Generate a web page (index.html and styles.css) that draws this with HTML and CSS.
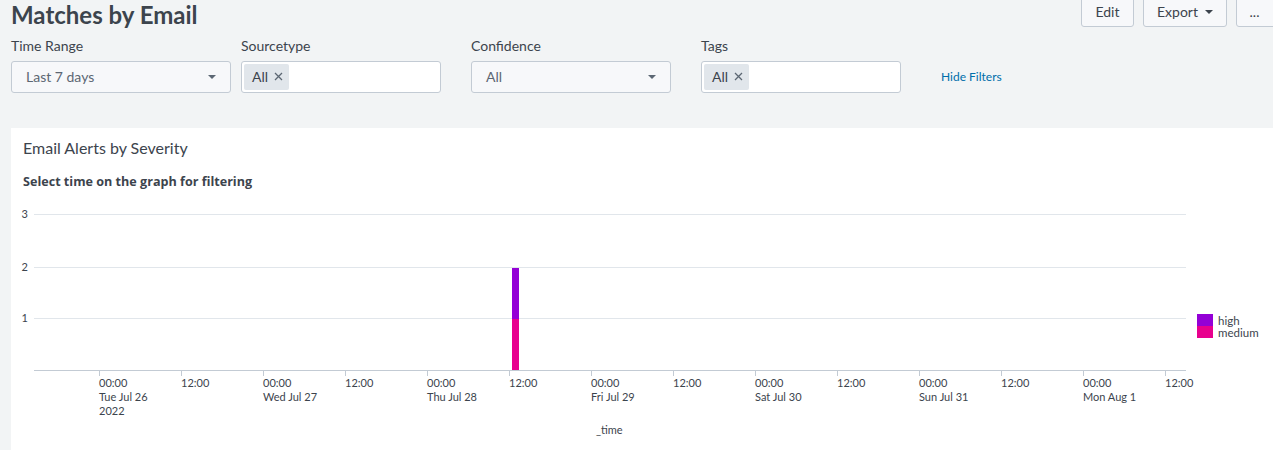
FILE: index.html
```html
<!DOCTYPE html>
<html>
<head>
<meta charset="utf-8">
<link rel="stylesheet" href="styles.css">
</head>
<body>
<div class="header">
  <h1 class="title">Matches by Email</h1>
  <div class="actions">
    <button class="btn btn-edit">Edit</button>
    <button class="btn btn-export">Export <span class="caret"></span></button>
    <button class="btn btn-more">...</button>
  </div>
</div>
<div class="filters">
  <div class="filter">
    <div class="label">Time Range</div>
    <div class="select wide"><span>Last 7 days</span><span class="caret"></span></div>
  </div>
  <div class="filter">
    <div class="label">Sourcetype</div>
    <div class="multi"><span class="pill">All <svg class="x" width="9" height="9" viewBox="0 0 9 9"><path d="M1 1L8 8M8 1L1 8" stroke="#5c6773" stroke-width="1.3"/></svg></span></div>
  </div>
  <div class="filter">
    <div class="label">Confidence</div>
    <div class="select"><span>All</span><span class="caret"></span></div>
  </div>
  <div class="filter">
    <div class="label">Tags</div>
    <div class="multi"><span class="pill">All <svg class="x" width="9" height="9" viewBox="0 0 9 9"><path d="M1 1L8 8M8 1L1 8" stroke="#5c6773" stroke-width="1.3"/></svg></span></div>
  </div>
  <div class="filter hide">
    <a class="hide-link">Hide Filters</a>
  </div>
</div>
<div class="panel">
  <div class="panel-title">Email Alerts by Severity</div>
  <div class="panel-sub">Select time on the graph for filtering</div>
  <svg class="chart" width="1262" height="250" viewBox="0 0 1262 250" font-family="Lato, 'Open Sans', sans-serif" font-size="11" fill="#3c444d">
    <g stroke="#e1e6eb" stroke-width="1">
      <line x1="23" y1="14.5" x2="1175" y2="14.5"/>
      <line x1="23" y1="67.5" x2="1175" y2="67.5"/>
      <line x1="23" y1="118.5" x2="1175" y2="118.5"/>
    </g>
    <line x1="23" y1="170.5" x2="1175" y2="170.5" stroke="#c3cbd4"/>
    <g text-anchor="end">
      <text x="17" y="18">3</text>
      <text x="17" y="71">2</text>
      <text x="17" y="122">1</text>
    </g>
    <g stroke="#c3cbd4">
      <line x1="88.5" y1="170" x2="88.5" y2="176"/>
      <line x1="170.5" y1="170" x2="170.5" y2="176"/>
      <line x1="252.5" y1="170" x2="252.5" y2="176"/>
      <line x1="334.5" y1="170" x2="334.5" y2="176"/>
      <line x1="416.5" y1="170" x2="416.5" y2="176"/>
      <line x1="498.5" y1="170" x2="498.5" y2="176"/>
      <line x1="580.5" y1="170" x2="580.5" y2="176"/>
      <line x1="662.5" y1="170" x2="662.5" y2="176"/>
      <line x1="744.5" y1="170" x2="744.5" y2="176"/>
      <line x1="826.5" y1="170" x2="826.5" y2="176"/>
      <line x1="908.5" y1="170" x2="908.5" y2="176"/>
      <line x1="990.5" y1="170" x2="990.5" y2="176"/>
      <line x1="1072.5" y1="170" x2="1072.5" y2="176"/>
      <line x1="1154.5" y1="170" x2="1154.5" y2="176"/>
    </g>
    <g>
      <text x="88" y="187">00:00</text><text x="88" y="201">Tue Jul 26</text><text x="88" y="215">2022</text>
      <text x="170" y="187">12:00</text>
      <text x="252" y="187">00:00</text><text x="252" y="201">Wed Jul 27</text>
      <text x="334" y="187">12:00</text>
      <text x="416" y="187">00:00</text><text x="416" y="201">Thu Jul 28</text>
      <text x="498" y="187">12:00</text>
      <text x="580" y="187">00:00</text><text x="580" y="201">Fri Jul 29</text>
      <text x="662" y="187">12:00</text>
      <text x="744" y="187">00:00</text><text x="744" y="201">Sat Jul 30</text>
      <text x="826" y="187">12:00</text>
      <text x="908" y="187">00:00</text><text x="908" y="201">Sun Jul 31</text>
      <text x="990" y="187">12:00</text>
      <text x="1072" y="187">00:00</text><text x="1072" y="201">Mon Aug 1</text>
      <text x="1154" y="187">12:00</text>
    </g>
    <rect x="501" y="68" width="7" height="51" fill="#9400d6"/>
    <rect x="501" y="119" width="7" height="51" fill="#e8008e"/>
    <rect x="1186" y="114" width="16" height="12" fill="#9400d6"/>
    <rect x="1186" y="126" width="16" height="12" fill="#e8008e"/>
    <text x="1207" y="125" font-size="11.5">high</text>
    <text x="1207" y="137" font-size="11.5">medium</text>
    <text x="585" y="234">_time</text>
  </svg>
</div>
</body>
</html>
```
FILE: styles.css
```css
* { box-sizing: border-box; }
html, body { margin: 0; padding: 0; }
body {
  background: #f2f4f5;
  font-family: Lato, "Open Sans", sans-serif;
  color: #3c444d;
  width: 1273px;
  height: 450px;
  overflow: hidden;
}
.header {
  display: flex;
  justify-content: space-between;
  align-items: flex-start;
  padding-left: 11px;
  height: 36px;
}
.title {
  margin: 0;
  font-size: 24px;
  font-weight: 700;
  line-height: 30px;
  color: #3c444d;
}
.actions {
  display: flex;
  gap: 9px;
  margin-top: -8px;
  margin-right: -13px;
}
.btn {
  height: 35px;
  padding: 4px 0 0;
  border: 1px solid #c3cbd4;
  border-radius: 3px;
  background: #f7f8fa;
  color: #3c444d;
  font-family: Lato, "Open Sans", sans-serif;
  font-size: 14px;
  display: flex;
  align-items: center;
  justify-content: center;
  gap: 7px;
}
.btn-edit { width: 53px; }
.btn-export { width: 84px; }
.btn-more { width: 50px; padding-right: 13px; }
.btn .caret {
  width: 0; height: 0;
  border-left: 4px solid transparent;
  border-right: 4px solid transparent;
  border-top: 4px solid #3c444d;
}
.filters {
  display: flex;
  gap: 10px;
  padding-left: 11px;
}
.filter { width: 220px; }
.label {
  font-size: 14px;
  line-height: 20px;
  height: 25px;
}
.select, .multi {
  height: 32px;
  width: 200px;
  border: 1px solid #c3cbd4;
  border-radius: 3px;
  display: flex;
  align-items: center;
  font-size: 14px;
}
.select.wide { width: 220px; }
.select {
  background: #f7f8fa;
  justify-content: space-between;
  padding: 0 14px 1px;
  color: #5c6773;
}
.select .caret {
  width: 0; height: 0;
  border-left: 4px solid transparent;
  border-right: 4px solid transparent;
  border-top: 4px solid #5c6773;
}
.multi {
  background: #fff;
  padding: 0 2px;
}
.pill {
  background: #e1e6eb;
  border-radius: 2px;
  height: 26px;
  padding: 0 6px 1px 8px;
  display: flex;
  align-items: center;
  gap: 6px;
  color: #3c444d;
}
.hide { display: flex; align-items: flex-end; margin-left: 10px; }
.hide-link {
  color: #006eaa;
  font-size: 12px;
  line-height: 32px;
}
.panel {
  margin: 35px 0 0 11px;
  background: #fff;
  height: 322px;
  padding-top: 10px;
}
.panel-title {
  font-size: 16px;
  line-height: 20px;
  padding-left: 12px;
}
.panel-sub {
  font-family: "Open Sans", Lato, sans-serif;
  font-size: 12.6px;
  font-weight: 700;
  line-height: 16px;
  padding-left: 12px;
  margin-top: 16px;
}
.chart { display: block; margin-top: 10px; }
```
